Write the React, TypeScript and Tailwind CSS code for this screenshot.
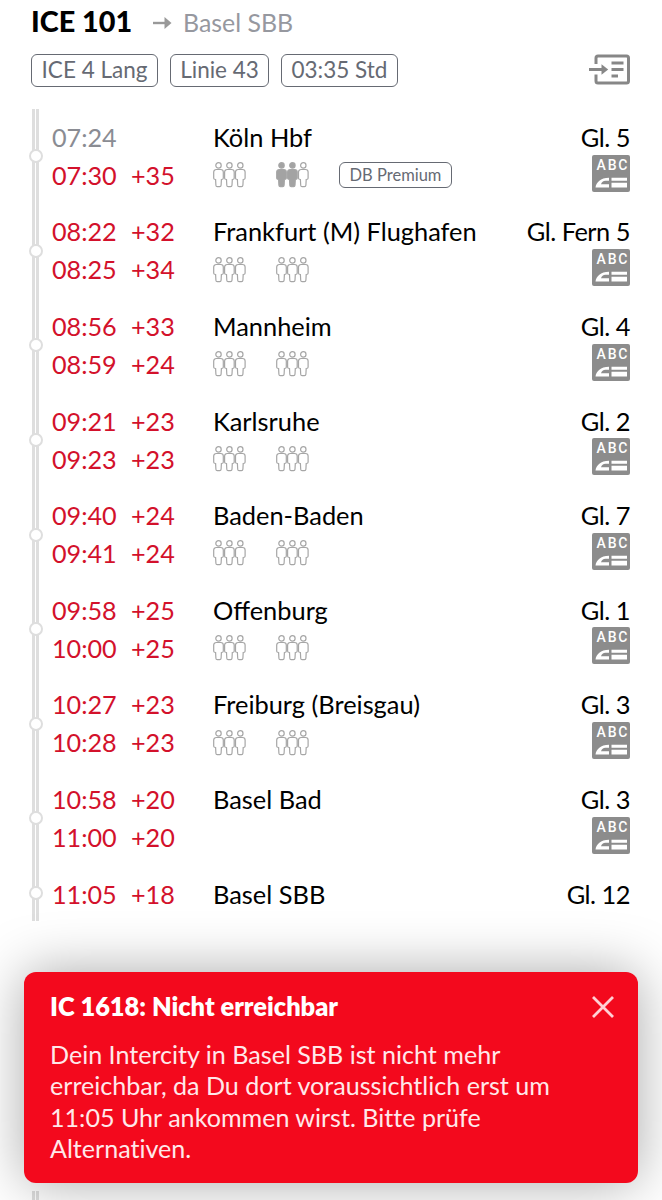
import React from "react";

type Stop = {
  name: string;
  track: string;
  arrival?: string;
  arrivalDelay?: string;
  departure?: string;
  departureDelay?: string;
  // number of filled persons, [1st class, 2nd class]
  load?: [number, number];
  operator?: string;
};

const stops: Stop[] = [
  { name: "Köln Hbf", track: "Gl. 5", arrival: "07:24", departure: "07:30", departureDelay: "+35", load: [0, 2], operator: "DB Premium" },
  { name: "Frankfurt (M) Flughafen", track: "Gl. Fern 5", arrival: "08:22", arrivalDelay: "+32", departure: "08:25", departureDelay: "+34", load: [0, 0] },
  { name: "Mannheim", track: "Gl. 4", arrival: "08:56", arrivalDelay: "+33", departure: "08:59", departureDelay: "+24", load: [0, 0] },
  { name: "Karlsruhe", track: "Gl. 2", arrival: "09:21", arrivalDelay: "+23", departure: "09:23", departureDelay: "+23", load: [0, 0] },
  { name: "Baden-Baden", track: "Gl. 7", arrival: "09:40", arrivalDelay: "+24", departure: "09:41", departureDelay: "+24", load: [0, 0] },
  { name: "Offenburg", track: "Gl. 1", arrival: "09:58", arrivalDelay: "+25", departure: "10:00", departureDelay: "+25", load: [0, 0] },
  { name: "Freiburg (Breisgau)", track: "Gl. 3", arrival: "10:27", arrivalDelay: "+23", departure: "10:28", departureDelay: "+23", load: [0, 0] },
  { name: "Basel Bad", track: "Gl. 3", arrival: "10:58", arrivalDelay: "+20", departure: "11:00", departureDelay: "+20" },
  { name: "Basel SBB", track: "Gl. 12", arrival: "11:05", arrivalDelay: "+18" },
];

function Persons({ filled }: { filled: number }) {
  return (
    <svg width="34" height="26" viewBox="0 0 34 26" stroke="#a6a6a6" strokeWidth="1.2">
      {[0, 1, 2].map((i) => (
        <g
          key={i}
          transform={`translate(${i * 10.9} 0)`}
          fill={i < filled ? "#a3a3a3" : "white"}
        >
          <circle cx="5.5" cy="3.4" r="2.7" />
          <path d="M3.300 7.500h4.400a2.600 2.600 0 0 1 2.600 2.600v6.200q0 1.200-1.900 1.200l-.3 5.700q-.1 1.400-1.400 1.400H4.300q-1.300 0-1.400-1.400l-.3-5.700Q.7 17.500.7 16.300v-6.200a2.600 2.600 0 0 1 2.600-2.600z" />
        </g>
      ))}
    </svg>
  );
}

function WagonOrderIcon() {
  return (
    <svg width="38" height="38" viewBox="0 0 38 38">
      <rect width="38" height="37" rx="2" fill="#8c8c8c" />
      <text
        x="4.500"
        y="15"
        fill="white"
        fontSize="14"
        fontWeight="500"
        textLength="31"
        className="font-['Roboto',sans-serif]"
      >
        ABC
      </text>
      <path d="M3.500 32.500c.8-5.200 5-9.500 13.500-9.700v3h-3.500q-3.500.3-4.500 3.400h8v3.300z" fill="white" />
      <path d="M19.500 22.800H35v3H19.500zM19.500 27.800H35v4.700H19.500z" fill="white" />
    </svg>
  );
}

function BoardingIcon() {
  return (
    <svg width="42" height="32" viewBox="0 0 42 32" fill="none" stroke="#878787" strokeWidth="3">
      <path d="M7 10V4q0-2 2-2h28.500q2 0 2 2v23q0 2-2 2H9q-2 0-2-2v-6.500" />
      <path d="M0 15.500h14M22.500 9h12M22.500 15.500h12M22.500 22h6.500" />
      <path d="M12.500 10.200l6.700 5.300-6.700 5.300z" fill="#878787" stroke="none" />
    </svg>
  );
}

function Time({ time, delay, late }: { time?: string; delay?: string; late: boolean }) {
  return (
    <div
      className={`flex h-[38px] items-center text-[25.200px] ${late ? "text-[#d3112b]" : "text-[#8a8c93]"}`}
    >
      <span className="w-[79px]">{time}</span>
      <span>{delay}</span>
    </div>
  );
}

function Track() {
  return <div className="h-full w-[7px] border-x-3 border-[#dedede]" />;
}

function StopRow({ stop }: { stop: Stop }) {
  const isLast = !stop.departure;
  return (
    <div className={`flex ${isLast ? "h-[55px]" : "h-[94.600px]"}`}>
      <div className="relative ml-[32px] w-[20px] shrink-0">
        <Track />
        <div className="absolute top-1/2 -left-[3.500px] size-[14px] -translate-y-1/2 rounded-full border-2 border-[#dedede] bg-white" />
      </div>
      <div className="w-[161px] shrink-0 pt-[9.500px]">
        <Time time={stop.arrival} delay={stop.arrivalDelay} late={!!stop.arrivalDelay} />
        {!isLast && (
          <Time time={stop.departure} delay={stop.departureDelay} late={!!stop.departureDelay} />
        )}
      </div>
      <div className="min-w-0 grow pt-[9.500px]">
        <div className="flex h-[38px] items-center whitespace-nowrap">{stop.name}</div>
        {stop.load && (
          <div className="flex h-[37px] items-center">
            <Persons filled={stop.load[0]} />
            <div className="ml-[29px] flex">
              <Persons filled={stop.load[1]} />
            </div>
            {stop.operator && (
              <span className="ml-[29px] flex h-[26px] w-[113px] items-center justify-center rounded-[6px] border border-[#666a73] text-[16.500px] text-[#666a73]">
                {stop.operator}
              </span>
            )}
          </div>
        )}
      </div>
      <div className="flex flex-col items-end pt-[9.500px] pr-[32px]">
        <div className="flex h-[38px] items-center tracking-[-0.500px] whitespace-nowrap">
          {stop.track}
        </div>
        {!isLast && (
          <div className="-mt-[2px]">
            <WagonOrderIcon />
          </div>
        )}
      </div>
    </div>
  );
}

function Tag({ children, className }: { children: React.ReactNode; className: string }) {
  return (
    <span
      className={`flex h-[33px] items-center justify-center rounded-[6px] border border-[#666a73] pt-px text-[22.500px] whitespace-nowrap text-[#666a73] ${className}`}
    >
      {children}
    </span>
  );
}

function Header() {
  return (
    <header className="h-[109px] pr-[31px] pl-[31px]">
      <div className="flex h-[46px] items-center">
        <h1 className="-mt-[3px] w-[122px] text-[28.800px] font-black whitespace-nowrap">ICE 101</h1>
        <svg width="19" height="14" viewBox="0 0 19 14">
          <path d="M0 7h13" stroke="#999" strokeWidth="2.400" />
          <path d="M11.500 1l7 6-7 6z" fill="#999" />
        </svg>
        <span className="-mt-px ml-[11px] text-[24.900px] text-[#96989f]">Basel SBB</span>
      </div>
      <div className="mt-[7.500px] flex items-center">
        <Tag className="w-[127px]">ICE 4 Lang</Tag>
        <Tag className="ml-[12px] w-[99px]">Linie 43</Tag>
        <Tag className="ml-[12px] w-[117px]">03:35 Std</Tag>
        <div className="ml-auto">
          <BoardingIcon />
        </div>
      </div>
    </header>
  );
}

function Alert() {
  return (
    <div className="relative mx-[24px] mt-[51px] h-[211px] rounded-[12px] bg-[#f3091d] pt-[19px] pr-[24px] pl-[26px] text-white shadow-[0_0_55px_rgba(0,0,0,0.34)]">
      <div className="flex h-[32px] items-center justify-between">
        <h2 className="text-[25.400px] font-extrabold whitespace-nowrap">IC 1618: Nicht erreichbar</h2>
        <svg width="22" height="22" viewBox="0 0 22 22" stroke="#ffd0d4" strokeWidth="2.800">
          <path d="M1 1l20 20M21 1L1 21" />
        </svg>
      </div>
      <p className="mt-[16px] text-[25.100px] leading-[31.500px] whitespace-nowrap text-[#ffe8ea] [font-variant-ligatures:none]">
        Dein Intercity in Basel SBB ist nicht mehr
        <br />
        erreichbar, da Du dort voraussichtlich erst um
        <br />
        11:05 Uhr ankommen wirst. Bitte prüfe
        <br />
        Alternativen.
      </p>
    </div>
  );
}

export default function App() {
  return (
    <div className="h-[1200px] w-[662px] overflow-hidden bg-white font-['Lato',sans-serif] text-[25.400px] leading-none text-black">
      <Header />
      <main>
        {stops.map((stop) => (
          <StopRow key={stop.name} stop={stop} />
        ))}
      </main>
      <Alert />
      <div className="mt-[8px] ml-[32px] h-[12px]">
        <Track />
      </div>
    </div>
  );
}
